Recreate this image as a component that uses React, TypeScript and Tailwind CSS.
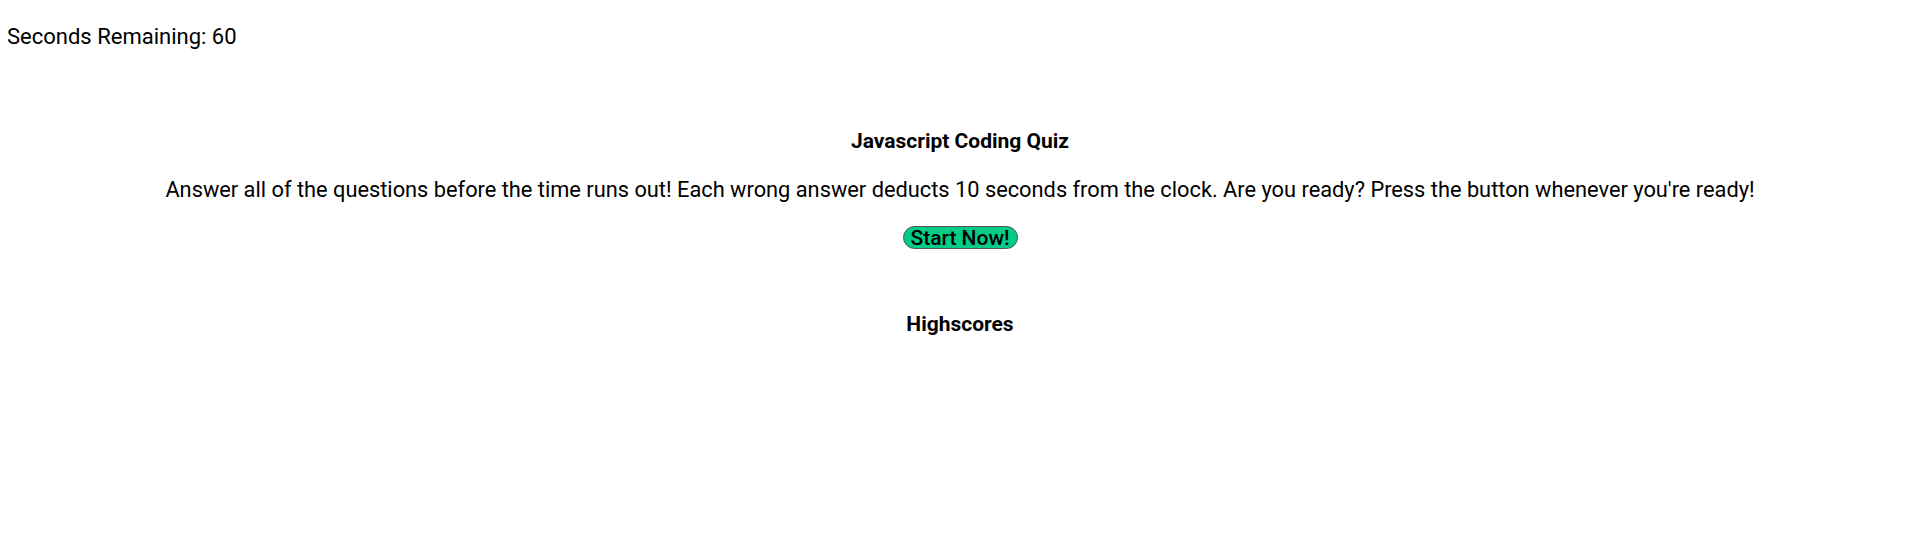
export default function App() {
  return (
    <div className="w-full bg-white text-black" style={{ fontFamily: "Roboto, 'Liberation Sans', sans-serif" }}>
      <div className="px-[7px] pt-[23px] text-[22px] leading-[28px]">Seconds Remaining: 60</div>
      <div className="mt-[76px] flex flex-col items-center text-center">
        <h3 className="text-[21px] font-bold leading-[28px]">Javascript Coding Quiz</h3>
        <p className="mt-[21px] text-[21.8px] leading-[28px]">
          Answer all of the questions before the time runs out! Each wrong answer deducts 10 seconds from the clock. Are you ready? Press the button whenever you're ready!
        </p>
        <button className="mt-[22px] h-[23px] w-[115px] rounded-full border border-[#555] bg-[#00cc88] text-[21px] font-medium leading-[20px] text-black">
          Start Now!
        </button>
        <h3 className="mt-[61px] text-[21px] font-bold leading-[28px]">Highscores</h3>
      </div>
    </div>
  );
}
